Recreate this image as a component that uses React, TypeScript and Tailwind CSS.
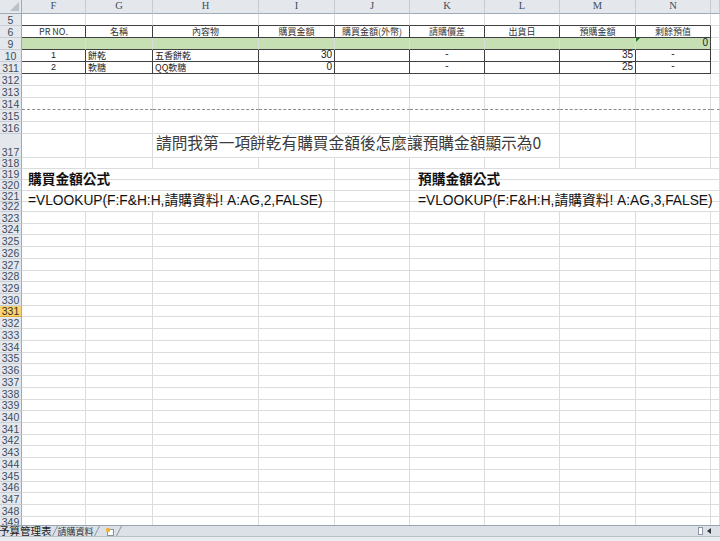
import React from 'react';

type Cell = {
  span?: number;
  r?: 'g' | 'd';
  b?: 'g' | 'd' | 'dash';
  bg?: string;
  content?: React.ReactNode;
  align?: string;
  extra?: string;
};

const SPAN: Record<number, string> = { 1: '', 2: 'col-span-2', 3: 'col-span-3', 4: 'col-span-4', 5: 'col-span-5' };
const RC = { g: 'border-r-[#dadcdd]', d: 'border-r-[#404040]' };
const BC = {
  g: 'border-b-[#dadcdd]',
  d: 'border-b-[#404040]',
  dash: 'border-b-[#8c8c8c] [border-bottom-style:dashed]',
};
const COLS =
  'grid grid-cols-[22px_64px_67px_106px_76px_75px_75px_75px_76px_75px_minmax(0,1fr)] grid-rows-[minmax(0,1fr)]';
const CJK = "font-['Noto_Sans_CJK_TC',sans-serif]";

const def = (): Cell[] => Array.from({ length: 10 }, () => ({}));

const hdrText = (t: string) => (
  <span className={`${CJK} text-[9px] leading-none text-[#333] whitespace-nowrap pb-[1px]`}>{t}</span>
);
const smallCjk = (t: string) => (
  <span className={`${CJK} text-[9px] leading-none text-[#222] whitespace-nowrap pl-[2px] pb-[1px]`}>{t}</span>
);
const num = (t: string) => (
  <span className="text-[10px] leading-none text-[#222] whitespace-nowrap pr-[2px] pb-[1px]">{t}</span>
);
const dash = () => <span className="text-[10px] leading-none text-[#222] pb-[2px]">-</span>;

type RowSpec = { label: string; h: string; cells: Cell[]; hl?: boolean };

function buildRows(): RowSpec[] {
  const rows: RowSpec[] = [];
  const r5 = def();
  for (let i = 0; i < 9; i++) r5[i].b = 'd';
  rows.push({ label: '5', h: 'h-[12px]', cells: r5 });
  const heads = ['PR NO.', '名稱', '內容物', '購買金額', '購買金額(外幣)', '請購價差', '出貨日', '預購金額', '剩餘預值'];
  const r6 = def();
  heads.forEach((t, i) => {
    r6[i] = { r: 'd', b: 'd', content: hdrText(t), align: 'items-end justify-center' };
  });
  rows.push({ label: '6', h: 'h-[12px]', cells: r6 });
  const r9 = def();
  for (let i = 0; i < 9; i++) r9[i] = { b: 'd', bg: 'bg-[#c6e0b4]' };
  r9[8] = {
    r: 'd',
    b: 'd',
    bg: 'bg-[#c6e0b4]',
    align: 'items-end justify-end',
    extra: 'relative',
    content: (
      <>
        <span className="absolute top-0 left-0 w-0 h-0 border-t-[4px] border-r-[4px] border-t-[#1f7a1f] border-r-transparent" />
        {num('0')}
      </>
    ),
  };
  rows.push({ label: '9', h: 'h-[12px]', cells: r9 });
  const data = [
    ['10', '1', '餅乾', '五香餅乾', '30', '35'],
    ['311', '2', '軟糖', 'QQ軟糖', '0', '25'],
  ];
  data.forEach(([lab, no, name, content, amt, pre]) => {
    const r = def();
    for (let i = 0; i < 9; i++) r[i] = { r: 'd', b: 'd' };
    r[0] = {
      r: 'd',
      b: 'd',
      align: 'items-end justify-center',
      content: <span className="text-[9px] leading-none text-[#222] pb-[1px]">{no}</span>,
    };
    r[1] = { r: 'd', b: 'd', align: 'items-end justify-start', content: smallCjk(name) };
    r[2] = { r: 'd', b: 'd', align: 'items-end justify-start', content: smallCjk(content) };
    r[3] = { r: 'd', b: 'd', align: 'items-end justify-end', content: num(amt) };
    r[5] = { r: 'd', b: 'd', align: 'items-end justify-center', content: dash() };
    r[7] = { r: 'd', b: 'd', align: 'items-end justify-end', content: num(pre) };
    r[8] = { r: 'd', b: 'd', align: 'items-end justify-center', content: dash() };
    rows.push({ label: lab, h: 'h-[12px]', cells: r });
  });
  rows.push({ label: '312', h: 'h-[12px]', cells: def() });
  rows.push({ label: '313', h: 'h-[12px]', cells: def() });
  const r314 = def().map((c) => ({ ...c, b: 'dash' as const }));
  rows.push({ label: '314', h: 'h-[12px]', cells: r314 });
  rows.push({ label: '315', h: 'h-[12px]', cells: def() });
  rows.push({ label: '316', h: 'h-[12px]', cells: def() });
  rows.push({
    label: '317',
    h: 'h-[24px]',
    cells: [
      {},
      {},
      {
        span: 5,
        align: 'items-end justify-start',
        content: (
          <span className={`${CJK} text-[15.7px] leading-none text-[#3c3c3c] whitespace-nowrap pl-[3px] pb-[6px]`}>
            請問我第一項餅乾有購買金額後怎麼讓預購金額顯示為0
          </span>
        ),
      },
      {},
      {},
      {},
    ],
  });
  rows.push({ label: '318', h: 'h-[11px]', cells: def() });
  rows.push({ label: '319', h: 'h-[11px]', cells: [{ span: 4 }, {}, { span: 5 }] });
  const label = (t: string, pl: string) => (
    <span className={`${CJK} font-bold text-[13.7px] leading-none text-[#111] whitespace-nowrap ${pl} pb-[4px]`}>
      {t}
    </span>
  );
  rows.push({
    label: '320',
    h: 'h-[11px]',
    cells: [
      { span: 4, align: 'items-end justify-start', content: label('購買金額公式', 'pl-[6px]') },
      {},
      { span: 5, align: 'items-end justify-start', content: label('預購金額公式', 'pl-[8px]') },
    ],
  });
  rows.push({ label: '321', h: 'h-[11px]', cells: [{ span: 4 }, {}, { span: 5 }] });
  const formula = (n: string, pl: string) => (
    <span
      className={`font-['Liberation_Sans','Noto_Sans_CJK_TC',sans-serif] text-[13.75px] leading-none text-[#111] whitespace-nowrap ${pl} pb-[3px]`}
    >
      =VLOOKUP(F:F&amp;H:H,請購資料! A:AG,{n},FALSE)
    </span>
  );
  rows.push({
    label: '322',
    h: 'h-[10px]',
    cells: [
      { span: 4, align: 'items-end justify-start', content: formula('2', 'pl-[6px]') },
      {},
      { span: 5, align: 'items-end justify-start', content: formula('3', 'pl-[8px]') },
    ],
  });
  for (let n = 323; n <= 350; n++) {
    rows.push({ label: String(n), h: 'h-[11.73px]', cells: def(), hl: n === 331 });
  }
  return rows;
}

function Row({ spec }: { spec: RowSpec }) {
  return (
    <div className={`${COLS} ${spec.h}`}>
      <div
        className={`flex items-end justify-center border-r border-b border-r-[#9eaab6] ${
          spec.hl ? 'bg-[#f8d474] border-b-[#e2a93a] text-[#3a3020]' : 'bg-[#e4e8ed] border-b-[#c7ced6] text-[#3e4d5e]'
        } text-[10.5px] leading-[10px] overflow-hidden`}
      >
        <span>{spec.label}</span>
      </div>
      {spec.cells.map((c, i) => (
        <div
          key={i}
          className={`${SPAN[c.span ?? 1]} min-w-0 flex border-r border-b ${RC[c.r ?? 'g']} ${BC[c.b ?? 'g']} ${
            c.bg ?? ''
          } ${c.align ?? ''} ${c.extra ?? ''}`}
        >
          {c.content}
        </div>
      ))}
    </div>
  );
}

function HeaderRow() {
  const letters = ['F', 'G', 'H', 'I', 'J', 'K', 'L', 'M', 'N', ''];
  return (
    <div className={`${COLS} h-[14px]`}>
      <div className="relative bg-[#e4e8ed] border-r border-b border-r-[#9eaab6] border-b-[#9eaab6]">
        <svg className="absolute right-[2px] bottom-[2px]" width="9" height="9" viewBox="0 0 9 9">
          <polygon points="9,0 9,9 0,9" fill="#b8c0ca" />
        </svg>
      </div>
      {letters.map((l, i) => (
        <div
          key={i}
          className="flex items-center justify-center bg-[#e4e8ed] border-r border-b border-r-[#c4cbd3] border-b-[#9eaab6] min-w-0"
        >
          <span className="font-['Liberation_Serif',serif] text-[10.5px] leading-none text-[#3e4d5e]">{l}</span>
        </div>
      ))}
    </div>
  );
}

function Sep() {
  return (
    <svg width="6" height="10" viewBox="0 0 6 10" className="shrink-0">
      <line x1="0.5" y1="10" x2="5.5" y2="0" stroke="#8a94a0" strokeWidth="1" />
    </svg>
  );
}

export default function App() {
  const rows = buildRows();
  return (
    <div className="w-[720px] h-[541px] flex flex-col overflow-hidden bg-white font-['Liberation_Sans','Noto_Sans_CJK_TC',sans-serif]">
      <div className="h-[525px] overflow-hidden">
        <HeaderRow />
        {rows.map((r) => (
          <Row key={r.label} spec={r} />
        ))}
      </div>
      <div className="h-[11px] flex items-center bg-[#dce1e7] border-t border-t-[#9aa4b0] overflow-hidden">
        <span className={`${CJK} text-[10.5px] leading-none text-[#222] whitespace-nowrap -ml-[1px]`}>予算管理表</span>
        <Sep />
        <span className={`${CJK} text-[9px] leading-none text-[#333] whitespace-nowrap`}>請購資料</span>
        <Sep />
        <svg width="10" height="9" viewBox="0 0 10 9" className="ml-[5px] shrink-0">
          <rect x="2.5" y="2.5" width="6" height="6" fill="#fff" stroke="#8a94a0" />
          <circle cx="3" cy="3" r="2.2" fill="#f2b233" />
        </svg>
        <span className="ml-[1px] flex">
          <Sep />
        </span>
        <div className="flex-1" />
        <div className="w-[5px] h-[8px] border border-[#8d96a2] bg-white shrink-0" />
        <svg width="5" height="6" viewBox="0 0 5 6" className="ml-[4px] mr-[8px] shrink-0">
          <polygon points="4,0 4,6 0,3" fill="#333" />
        </svg>
      </div>
      <div className="h-[5px] bg-[#e9ecf0] border-t border-t-[#b7bfc9]" />
    </div>
  );
}
